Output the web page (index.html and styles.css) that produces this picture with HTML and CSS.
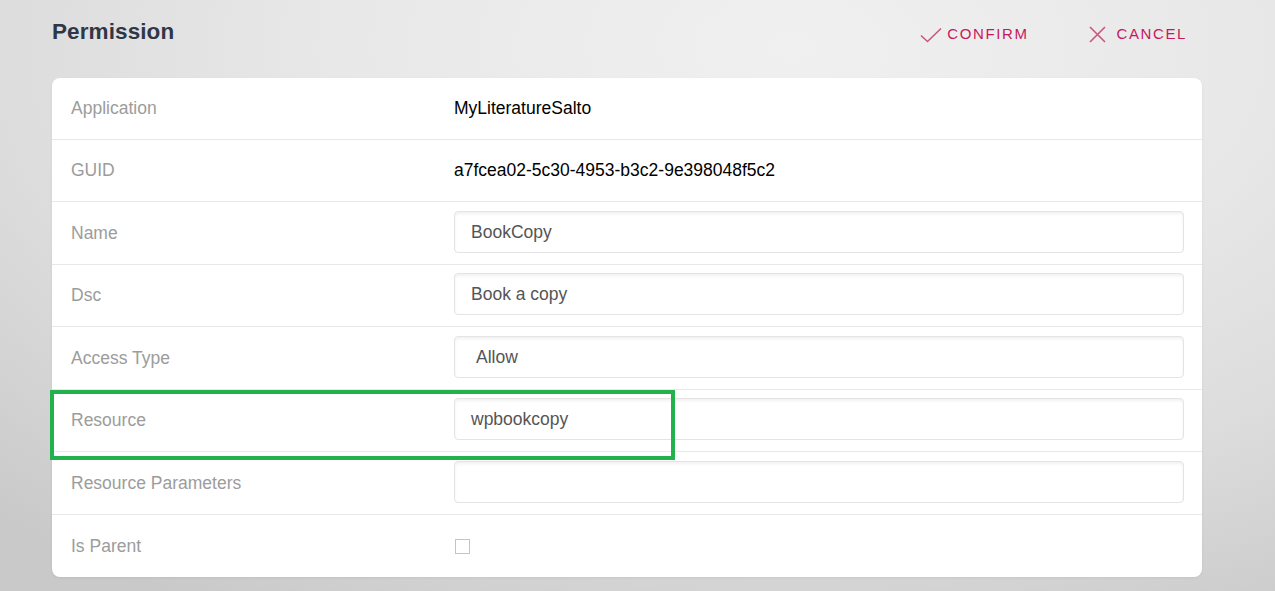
FILE: index.html
```html
<!DOCTYPE html>
<html>
<head>
<meta charset="utf-8">
<link rel="stylesheet" href="styles.css">
</head>
<body>
<div class="page">
  <header class="topbar">
    <h1 class="title">Permission</h1>
    <div class="actions">
      <button class="action">
        <svg class="icon icon-check" width="22" height="16" viewBox="0 0 22 16"><path d="M1 8.5 L7.5 14.5 L21 1.5" fill="none" stroke="#c9587c" stroke-width="1.6"/></svg>
        <span>CONFIRM</span>
      </button>
      <button class="action">
        <svg class="icon icon-x" width="17" height="17" viewBox="0 0 17 17"><path d="M1 1 L16 16 M16 1 L1 16" fill="none" stroke="#c9587c" stroke-width="1.6"/></svg>
        <span>CANCEL</span>
      </button>
    </div>
  </header>

  <div class="card">
    <div class="row">
      <div class="label">Application</div>
      <div class="value">MyLiteratureSalto</div>
    </div>
    <div class="row">
      <div class="label">GUID</div>
      <div class="value">a7fcea02-5c30-4953-b3c2-9e398048f5c2</div>
    </div>
    <div class="row">
      <div class="label">Name</div>
      <div class="value"><div class="input">BookCopy</div></div>
    </div>
    <div class="row">
      <div class="label">Dsc</div>
      <div class="value"><div class="input">Book a copy</div></div>
    </div>
    <div class="row">
      <div class="label">Access Type</div>
      <div class="value"><div class="input input-select">Allow</div></div>
    </div>
    <div class="row row-highlight">
      <div class="label">Resource</div>
      <div class="value"><div class="input">wpbookcopy</div></div>
      <div class="highlight"></div>
    </div>
    <div class="row">
      <div class="label">Resource Parameters</div>
      <div class="value"><div class="input"></div></div>
    </div>
    <div class="row">
      <div class="label">Is Parent</div>
      <div class="value"><span class="checkbox"></span></div>
    </div>
  </div>
</div>
</body>
</html>
```

FILE: styles.css
```css
html, body {
  margin: 0;
  padding: 0;
  height: 100%;
}

body {
  font-family: "Liberation Sans", Arial, sans-serif;
  background: radial-gradient(ellipse 90% 110% at 62% 8%, #f0f0f0 0%, #e8e8e8 40%, #dcdcdc 70%, #c9c9c9 100%);
  overflow: hidden;
}

.page {
  padding: 0 73px 0 52px;
}

.topbar {
  height: 78px;
  display: flex;
  align-items: flex-start;
  justify-content: space-between;
}

.title {
  margin: 19px 0 0 0;
  font-size: 22.5px;
  font-weight: bold;
  color: #2f3747;
  letter-spacing: 0.1px;
}

.actions {
  display: flex;
  gap: 60px;
  margin-top: 23px;
  margin-right: 15px;
}

.action {
  display: flex;
  align-items: center;
  gap: 7px;
  background: none;
  border: none;
  padding: 0;
  font-family: "Liberation Sans", Arial, sans-serif;
  font-size: 15px;
  letter-spacing: 1.6px;
  color: #c8175d;
  cursor: pointer;
}

.icon {
  display: block;
}

.icon-check {
  margin-top: 3px;
  margin-right: -2px;
}

.icon-x {
  margin-top: 3px;
  margin-right: 4px;
}

.card {
  width: 1150px;
  background: #fff;
  border-radius: 8px;
  box-shadow: 0 1px 3px rgba(0, 0, 0, 0.06);
}

.row {
  height: 61.5px;
  display: flex;
  align-items: center;
  border-bottom: 1px solid #e8e8e8;
  font-size: 17.5px;
  padding-top: 1px;
  box-sizing: border-box;
  height: 62.5px;
}

.row:last-child {
  border-bottom: none;
  height: 62.5px;
}

.row:first-child {
  height: 61.5px;
}

.label {
  width: 383px;
  padding-left: 19px;
  color: #9c9c9c;
  flex-shrink: 0;
}

.value {
  flex: 1;
  color: #000;
  padding-right: 18px;
}

.input {
  height: 40px;
  border: 1px solid #e4e4e4;
  border-radius: 4px;
  box-shadow: inset 0 2px 3px rgba(0, 0, 0, 0.06);
  box-sizing: content-box;
  padding-left: 16px;
  line-height: 40px;
  color: #555;
  margin-top: -3px;
}

.input-select {
  padding-left: 21px;
}

.checkbox {
  display: block;
  width: 13px;
  height: 13px;
  border: 1px solid #c4c4c4;
  margin-left: 1px;
  margin-top: 0px;
}

.row-highlight {
  position: relative;
}

.highlight {
  position: absolute;
  left: -2px;
  top: 0px;
  width: 617px;
  height: 62px;
  border: 4px solid #22b14c;
  pointer-events: none;
}
```
